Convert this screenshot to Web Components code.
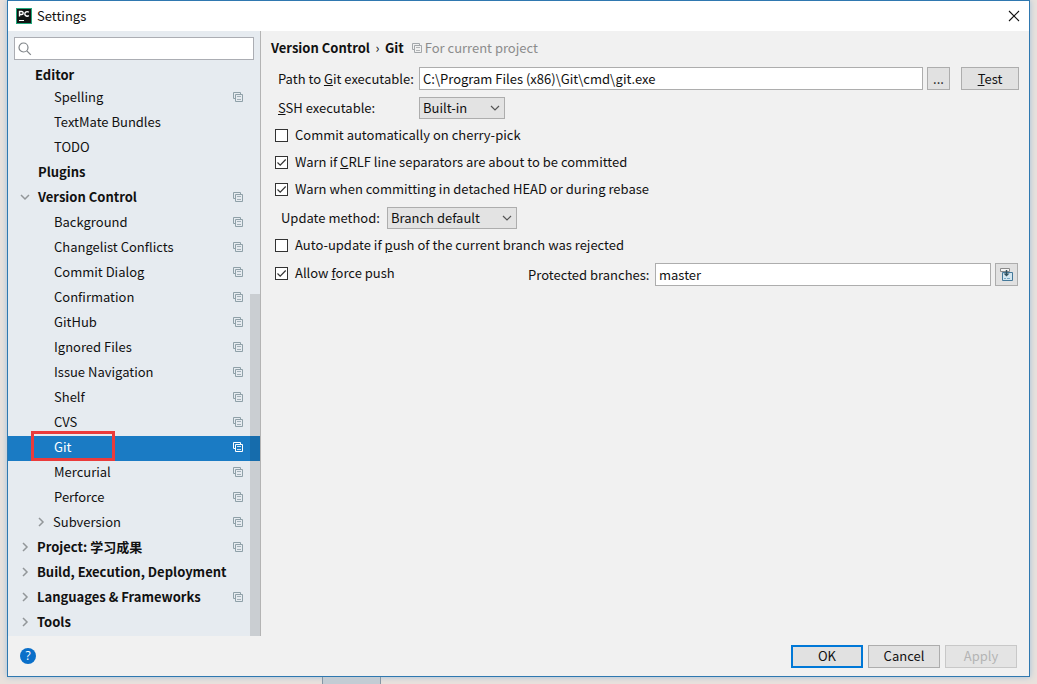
<!DOCTYPE html>
<html lang="en">
<head>
<meta charset="utf-8">
<title>Settings</title>
<style>
html, body { margin: 0; }
body { font: 13px/20px "Noto Sans CJK SC", "Open Sans", sans-serif; color: #111; background: #e9e1dc; }
</style>
</head>
<body>
<settings-window>
  <span slot="title">Settings</span>
  <settings-tree slot="sidebar">
    <tree-item kind="header">Editor</tree-item>
    <tree-item level="2" shared>Spelling</tree-item>
    <tree-item level="2">TextMate Bundles</tree-item>
    <tree-item level="2">TODO</tree-item>
    <tree-item kind="group">Plugins</tree-item>
    <tree-item kind="group" arrow="open" shared>Version Control</tree-item>
    <tree-item level="2" shared>Background</tree-item>
    <tree-item level="2" shared>Changelist Conflicts</tree-item>
    <tree-item level="2" shared>Commit Dialog</tree-item>
    <tree-item level="2" shared>Confirmation</tree-item>
    <tree-item level="2" shared>GitHub</tree-item>
    <tree-item level="2" shared>Ignored Files</tree-item>
    <tree-item level="2" shared>Issue Navigation</tree-item>
    <tree-item level="2" shared>Shelf</tree-item>
    <tree-item level="2" shared>CVS</tree-item>
    <tree-item level="2" shared selected>Git</tree-item>
    <tree-item level="2" shared>Mercurial</tree-item>
    <tree-item level="2" shared>Perforce</tree-item>
    <tree-item level="2" arrow="closed" shared>Subversion</tree-item>
    <tree-item kind="group" arrow="closed" shared>Project: 学习成果</tree-item>
    <tree-item kind="group" arrow="closed">Build, Execution, Deployment</tree-item>
    <tree-item kind="group" arrow="closed" shared>Languages &amp; Frameworks</tree-item>
    <tree-item kind="group" arrow="closed">Tools</tree-item>
  </settings-tree>
  <git-settings></git-settings>
  <dialog-footer slot="footer"></dialog-footer>
</settings-window>

<script>
function define(name, html, setup) {
  const template = document.createElement('template');
  template.innerHTML = html;
  customElements.define(name, class extends HTMLElement {
    constructor() {
      super();
      this.attachShadow({ mode: 'open' }).append(template.content.cloneNode(true));
    }
    connectedCallback() { if (setup) setup(this, this.shadowRoot); }
  });
}

define('shared-icon', `
<style>
:host { display: block; width: 10px; height: 10px; color: #8fa0a8; flex: none; }
svg { display: block; }
</style>
<svg width="10" height="10" viewBox="0 0 10 10" fill="none" stroke="currentColor" aria-hidden="true">
  <path d="M2 6.500H.5v-6h7V2"/><path d="M2.500 2.500h7v7h-7z"/><path d="M4 4.500h4M4 7.500h4" stroke-width=".8"/>
</svg>`);

define('push-button', `
<style>
:host { display: block; }
button { box-sizing: border-box; width: 100%; height: 23px; margin: 0; padding: 0; display: flex; align-items: center; justify-content: center;
  font: inherit; color: inherit; background: #e1e1e1; border: 1px solid #adadad; }
:host([primary]) button { border: 2px solid #0078d7; }
button:disabled { color: #b4b4b4; background: #e4e4e4; border-color: #c8c8c8; }
</style>
<button type="button"><span><slot></slot></span></button>`, (host, root) => {
  const button = root.querySelector('button');
  button.disabled = host.hasAttribute('disabled');
  if (host.title) button.setAttribute('aria-label', host.title);
});

define('check-option', `
<style>
:host { display: block; }
label { display: flex; align-items: center; gap: 7px; height: 27px; white-space: nowrap; }
span { padding-bottom: 1px; }
input { appearance: none; box-sizing: border-box; width: 13px; height: 13px; margin: 0; border: 1px solid #333; background: #fff; }
input:checked { background: #fff url("data:image/svg+xml,%3Csvg xmlns='http://www.w3.org/2000/svg' viewBox='0 0 11 11'%3E%3Cpath d='M1.500 5.500L4.200 8.200L9.700 2.500' fill='none' stroke='%23333' stroke-width='1.200'/%3E%3C/svg%3E") center / 11px 11px no-repeat; }
</style>
<label><input type="checkbox"><span><slot></slot></span></label>`, (host, root) => {
  root.querySelector('input').checked = host.hasAttribute('checked');
});

define('tree-item', `
<style>
:host { display: block; position: relative; }
a { display: flex; align-items: center; height: 25px; box-sizing: border-box; padding: 0 17px 3px 46px; color: inherit; text-decoration: none; white-space: nowrap; }
.label { flex: 1; }
.arrow { display: none; width: 10px; height: 10px; margin-right: 7px; flex: none; fill: none; stroke: #929699; stroke-width: 1.500; }
:host([arrow]) .arrow { display: block; }
:host([arrow="open"]) .arrow { transform: rotate(90deg); margin-right: 8px; }
:host([kind]) a { font-weight: bold; }
:host([kind="header"]) a { height: 22px; padding-left: 27px; padding-bottom: 0; }
:host([kind="group"]) a { padding-left: 30px; }
:host([kind="group"][arrow]) a { padding-left: 12px; }
:host([level="2"][arrow]) a { padding-left: 28px; }
shared-icon { display: none; }
:host([shared]) shared-icon { display: block; }
:host([selected]) { background: #1a7bc4; color: #fff; }
:host([selected]) shared-icon { color: #fff; }
.marker { display: none; position: absolute; left: 23px; top: -5px; width: 84px; height: 30px; box-sizing: border-box; border: 3px solid #ea3b3b; pointer-events: none; }
:host([selected]) .marker { display: block; }
</style>
<a href="#">
  <svg class="arrow" viewBox="0 0 10 10" aria-hidden="true"><path d="M3 1l4 4l-4 4"/></svg>
  <span class="label"><slot></slot></span>
  <shared-icon></shared-icon>
</a>
<span class="marker"></span>`);

define('settings-tree', `
<style>
:host { display: flex; flex-direction: column; background: #e6ebf0; }
.search { display: flex; align-items: center; margin: 6px 6px 4px; height: 23px; box-sizing: border-box; background: #fff; border: 1px solid #abadb3; }
.search svg { margin-left: 3px; flex: none; }
.search input { flex: 1; min-width: 0; border: 0; padding: 0 4px; font: inherit; background: none; outline: 0; }
nav { position: relative; flex: 1; }
.thumb { position: absolute; right: 0; top: 230px; bottom: 0; width: 10px; background: rgba(0, 0, 0, .12); }
</style>
<div class="search">
  <svg width="14" height="14" viewBox="0 0 14 14" fill="none" stroke="#7f8488" stroke-width="1.200" aria-hidden="true"><circle cx="5.500" cy="5.500" r="4.500"/><path d="M8.800 8.800l4 4"/></svg>
  <input type="search" aria-label="Search settings">
</div>
<nav aria-label="Settings"><slot></slot><div class="thumb"></div></nav>`);

define('git-settings', `
<style>
:host { display: block; padding: 7px 10px; }
h1 { display: flex; align-items: center; margin: 0 0 9px; font-size: 13px; line-height: 20px; white-space: nowrap; }
h1 .sep { width: 15px; text-align: center; font-weight: normal; }
h1 shared-icon { margin: 0 3px 0 8px; color: #a3a7aa; }
h1 small { font-size: 13px; font-weight: normal; color: #8c8c8c; }
.row { display: flex; align-items: center; white-space: nowrap; }
.wide { width: 141px; }
.row > label { flex: none; }
.path, .ssh { padding-left: 7px; }
.ssh { margin: 7px 0 3px; }
.method { margin: 4px 0 3px; padding-left: 10px; }
.method label { width: 106px; }
.force { margin-top: 4px; padding-right: 1px; }
.force check-option { width: 253px; margin-top: -2px; }
.force label { width: 127px; }
check-option { margin-left: 4px; }
.force { height: 23px; }
input, select { box-sizing: border-box; margin: 0; font: inherit; color: inherit; border: 1px solid #adadad; border-radius: 0; }
input { flex: 1; min-width: 0; height: 23px; padding: 0 3px; background: #fff; }
select { appearance: none; height: 22px; padding: 0 20px 0 3px; background: #e3e3e3 url("data:image/svg+xml,%3Csvg xmlns='http://www.w3.org/2000/svg' viewBox='0 0 10 6'%3E%3Cpath d='M1 1l4 4l4-4' fill='none' stroke='%23555' stroke-width='1.200'/%3E%3C/svg%3E") right 4px center / 10px 6px no-repeat; }
#ssh { width: 86px; }
#method { width: 130px; }
.square { width: 23px; margin-left: 4px; flex: none; }
.test { width: 58px; margin-left: 11px; flex: none; }
.square svg { display: block; }
</style>
<h1>Version Control<span class="sep">›</span>Git<shared-icon></shared-icon><small>For current project</small></h1>
<div class="row path">
  <label class="wide" for="path">Path to <u>G</u>it executable:</label>
  <input id="path" type="text" value="C:\\Program Files (x86)\\Git\\cmd\\git.exe">
  <push-button class="square">...</push-button>
  <push-button class="test"><u>T</u>est</push-button>
</div>
<div class="row ssh">
  <label class="wide" for="ssh"><u>S</u>SH executable:</label>
  <select id="ssh"><option>Built-in</option></select>
</div>
<check-option>Commit automatically on cherry-pick</check-option>
<check-option checked>Warn if <u>C</u>RLF line separators are about to be committed</check-option>
<check-option checked>Warn when committing in detached HEAD or during rebase</check-option>
<div class="row method">
  <label for="method">Update method:</label>
  <select id="method"><option>Branch default</option></select>
</div>
<check-option>Auto-update if <u>p</u>ush of the current branch was rejected</check-option>
<div class="row force">
  <check-option checked>Allow <u>f</u>orce push</check-option>
  <label for="protected">Protected branches:</label>
  <input id="protected" type="text" value="master">
  <push-button class="square" title="Expand"><svg width="15" height="15" viewBox="0 0 15 15" fill="none" aria-hidden="true">
    <path d="M3.500 5.500h10v8h-10z" fill="#d3e6f0" stroke="#44799a"/>
    <path d="M1.500 1.500h9v3h-9z" fill="#f5f5f5" stroke="#8a8a8a"/>
    <path d="M7.500 3v5" stroke="#31515f" stroke-width="1.500"/><path d="M4.500 6.500h6l-3 3z" fill="#31515f"/>
    <path d="M5 11.500h2m1 0h3" stroke="#79aac5"/>
  </svg></push-button>
</div>`);

define('dialog-footer', `
<style>
:host { display: flex; align-items: center; gap: 5px; height: 40px; padding: 0 12px; }
.help { display: block; width: 16px; height: 16px; margin: 0 auto 0 0; padding: 0; border: 0; border-radius: 50%; background: #0a6fc9; color: #fff; font: 12px/16px "Open Sans", sans-serif; text-align: center; }
push-button { width: 72px; }
</style>
<button class="help" type="button" aria-label="Help">?</button>
<push-button primary>OK</push-button>
<push-button>Cancel</push-button>
<push-button disabled>Apply</push-button>`);

define('settings-window', `
<style>
:host { display: flex; flex-direction: column; min-height: 100vh; box-sizing: border-box; padding: 0 7px; }
.window { flex: 1; display: flex; flex-direction: column; border: 1px solid #2f78b0; background: #f1f1f1; box-shadow: 0 0 6px #9fc0da; }
header { display: flex; align-items: center; height: 30px; padding: 0 9px 0 8px; box-sizing: border-box; background: #fff; }
header svg { flex: none; }
.title { flex: 1; margin-left: 5px; }
.close { display: block; padding: 0; border: 0; background: none; }
.close svg { display: block; }
main { flex: 1; display: grid; grid-template-columns: 252px 1fr; }
.content { border-left: 1px solid #b4b4b4; min-width: 0; }
.desktop { display: flex; height: 7px; }
.desktop i { width: 57px; margin-left: 315px; border: solid #8496a5; border-width: 0 1px; background: #c3ccd4; }
</style>
<div class="window">
  <header>
    <svg width="16" height="16" viewBox="0 0 16 16" aria-hidden="true">
      <path fill="#21a87b" d="M0 0h16v16H0z"/><path fill="#101513" d="M1 1h14v14H1z"/>
      <path d="M3.500 8.500V3.500h2.200a1.500 1.500 0 0 1 0 3H3.500M12.800 4.300a2.300 2.300 0 1 0 0 3.200" fill="none" stroke="#fff" stroke-width="1.400"/><path d="M3 12.500h5" stroke="#fff"/>
    </svg>
    <span class="title"><slot name="title"></slot></span>
    <button class="close" type="button" aria-label="Close"><svg width="12" height="12" viewBox="0 0 12 12" stroke="#111" stroke-width="1.100"><path d="M1 1l10 10M11 1L1 11"/></svg></button>
  </header>
  <main><slot name="sidebar"></slot><div class="content"><slot></slot></div></main>
  <slot name="footer"></slot>
</div>
<div class="desktop"><i></i></div>`);
</script>
</body>
</html>
